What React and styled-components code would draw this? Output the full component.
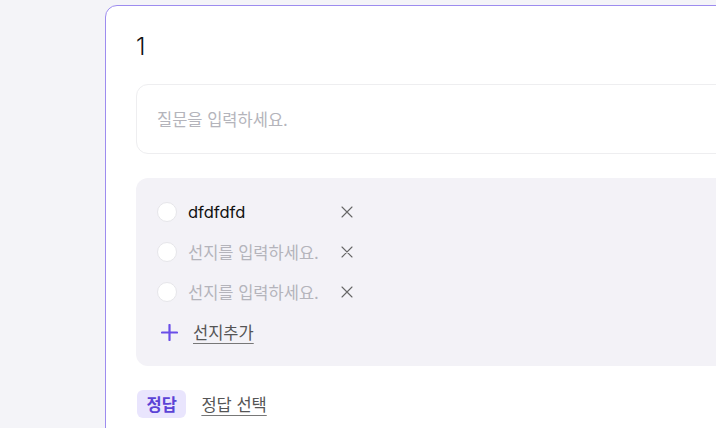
import React from "react";
import styled, { createGlobalStyle } from "styled-components";

const Global = createGlobalStyle`
  html, body { margin: 0; padding: 0; background: #f4f4f8; overflow: hidden; }
  body { font-family: Inter, "Noto Sans CJK KR", sans-serif; }
  * { box-sizing: border-box; }
`;

const Page = styled.div`
  width: 716px;
  height: 428px;
  overflow: hidden;
  padding: 5px 0 0 105px;
`;

const Card = styled.div`
  width: 700px;
  min-height: 500px;
  background: #fff;
  border: 1px solid #9d8cef;
  border-radius: 12px;
  padding: 26px 30px 24px;
  display: flex;
  flex-direction: column;
`;

const Number = styled.div`
  font-size: 24px;
  line-height: 30px;
  font-weight: 300;
  color: #111;
  margin-bottom: 22px;
`;

const QuestionBox = styled.div`
  height: 70px;
  border: 1px solid #eeeef0;
  border-radius: 12px;
  display: flex;
  align-items: center;
  padding: 0 20px;
  font-size: 16.5px;
  color: #b4b4bb;
  margin-bottom: 24px;
`;

const Options = styled.div`
  background: #f3f2f7;
  border-radius: 12px;
  padding: 20px 20px;
  display: flex;
  flex-direction: column;
  gap: 12px;
`;

const Row = styled.div`
  height: 28px;
  display: flex;
  align-items: center;
`;

const Radio = styled.span`
  width: 20px;
  height: 20px;
  border-radius: 50%;
  background: #fff;
  border: 1px solid #e6e6ea;
  flex: none;
  margin-left: 1px;
`;

const OptionText = styled.span`
  width: 152px;
  margin-left: 11px;
  font-size: 16.5px;
  color: ${(p) => (p.$placeholder ? "#b4b4bb" : "#111")};
  white-space: nowrap;
`;

const Remove = styled.span`
  width: 14px;
  height: 14px;
  display: flex;
  align-items: center;
  justify-content: center;
  color: #666;
`;

const AddRow = styled(Row)`
  gap: 15px;
  padding-left: 5px;
`;

const LinkText = styled.span`
  font-size: 16.5px;
  color: #555;
  text-decoration: underline;
  text-underline-offset: 4px;
  text-decoration-color: #777;
`;

const Footer = styled.div`
  margin-top: 24px;
  display: flex;
  align-items: center;
  gap: 15px;
  padding-left: 1px;
`;

const Badge = styled.span`
  height: 28px;
  padding: 0 9.5px;
  border-radius: 6px;
  background: #e9e5fd;
  color: #5b43d6;
  font-weight: 700;
  font-size: 16.5px;
  display: flex;
  align-items: center;
`;

const XIcon = () => (
  <svg width="12" height="12" viewBox="0 0 12 12">
    <path d="M1 1L11 11M11 1L1 11" stroke="currentColor" strokeWidth="1.1" strokeLinecap="round" />
  </svg>
);

const PlusIcon = () => (
  <svg width="17" height="17" viewBox="0 0 17 17">
    <path d="M8.5 1V16M1 8.5H16" stroke="#6a4ee8" strokeWidth="2.2" strokeLinecap="round" />
  </svg>
);

const options = [
  { text: "dfdfdfd", placeholder: false },
  { text: "선지를 입력하세요.", placeholder: true },
  { text: "선지를 입력하세요.", placeholder: true },
];

export default function App() {
  return (
    <>
      <Global />
      <Page>
        <Card>
          <Number>1</Number>
          <QuestionBox>질문을 입력하세요.</QuestionBox>
          <Options>
            {options.map((o, i) => (
              <Row key={i}>
                <Radio />
                <OptionText $placeholder={o.placeholder}>{o.text}</OptionText>
                <Remove>
                  <XIcon />
                </Remove>
              </Row>
            ))}
            <AddRow>
              <PlusIcon />
              <LinkText>선지추가</LinkText>
            </AddRow>
          </Options>
          <Footer>
            <Badge>정답</Badge>
            <LinkText>정답 선택</LinkText>
          </Footer>
        </Card>
      </Page>
    </>
  );
}
